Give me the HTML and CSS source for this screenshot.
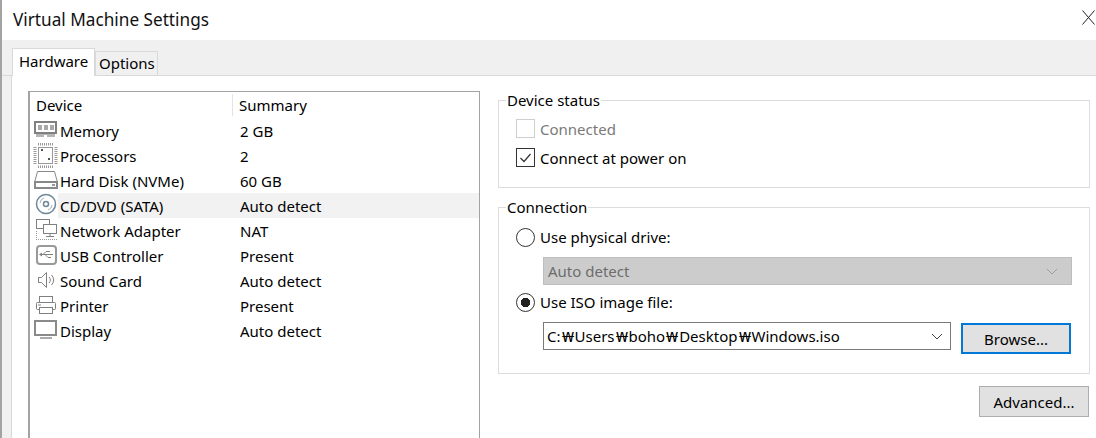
FILE: index.html
```html
<!DOCTYPE html>
<html lang="en">
<head>
<meta charset="utf-8">
<title>Virtual Machine Settings</title>
<link rel="stylesheet" href="styles.css">
</head>
<body>
<div class="window">
  <header class="titlebar">
    <h1 class="title">Virtual Machine Settings</h1>
    <svg class="close" width="13" height="15" viewBox="0 0 13 15"><path d="M.5.5 12.500 14.500M12.500.5.500 14.500" stroke="#222" stroke-width="1" fill="none"/></svg>
  </header>
  <div class="tabstrip">
    <div class="tab tab-active">Hardware</div>
    <div class="tab">Options</div>
  </div>
  <div class="page">
    <section class="devices">
      <div class="row head"><div class="col-device">Device</div><div class="col-summary">Summary</div></div>
      <div class="row"><svg class="icon" viewBox="0 0 26 25"><rect x="2" y="4" width="21" height="11" fill="#fff" stroke="#808080" stroke-width="2"/><path d="M5 7h4v5H5zM11 7h4v5h-4zM17 7h4v5h-4z" fill="#a8a8a8"/><path d="M3 16h19v3H3z" fill="#b5b5b5"/><path d="M11 17h3v2h-3z" fill="#fff"/></svg><div class="name">Memory</div><div class="val">2 GB</div></div>
      <div class="row"><svg class="icon" viewBox="0 0 26 25"><rect x="5.500" y="4.500" width="14" height="16" fill="#fff" stroke="#999"/><path d="M8 6h2v2H8zM15 15h2v2h-2z" fill="#555"/><path d="M5 1h15M5 24h15M2 4v17M23 4v17" stroke="#999" stroke-width="3" stroke-dasharray="1 1" fill="none"/></svg><div class="name">Processors</div><div class="val">2</div></div>
      <div class="row"><svg class="icon" viewBox="0 0 26 25"><path d="M4.500 3.500h17l3 11h-23z" fill="#fff" stroke="#888"/><rect x="2" y="14" width="22" height="6" fill="#fff" stroke="#888" stroke-width="2"/><path d="M19 16h3v2h-3z" fill="#999"/></svg><div class="name">Hard Disk (NVMe)</div><div class="val">60 GB</div></div>
      <div class="row selected"><svg class="icon" viewBox="0 0 26 25"><circle cx="13" cy="11" r="9.500" fill="#fff" stroke="#6f8796" stroke-width="1.500"/><circle cx="13" cy="11" r="2.500" fill="none" stroke="#6f8796" stroke-width="1.500"/><path d="M7 10a6 6 0 0 1 4-5M19 12a6 6 0 0 1-4 5" stroke="#9fb0bc" fill="none"/></svg><div class="name">CD/DVD (SATA)</div><div class="val">Auto detect</div></div>
      <div class="row"><svg class="icon" viewBox="0 0 26 25"><rect x="3.500" y="1.500" width="13" height="9" fill="#fff" stroke="#808080"/><rect x="10.500" y="6.500" width="13" height="9" fill="#fff" stroke="#808080"/><path d="M17 16v3M13 18.500h8" stroke="#808080" fill="none"/><path d="M3.500 13v8M3 21.500h21" stroke="#999" fill="none" stroke-dasharray="1 1"/></svg><div class="name">Network Adapter</div><div class="val">NAT</div></div>
      <div class="row"><svg class="icon" viewBox="0 0 26 25"><rect x="4" y="3" width="19" height="18" rx="3" fill="#fff" stroke="#999" stroke-width="2"/><path d="M7 11.500h13M10 11.500l3-3h4M12 11.500l3 3h3" stroke="#808080" fill="none"/><path d="M6 11.500l3-2v4z" fill="#808080"/></svg><div class="name">USB Controller</div><div class="val">Present</div></div>
      <div class="row"><svg class="icon" viewBox="0 0 26 25"><path d="M5.500 9.500h3l5-5v15l-5-5h-3z" fill="#fff" stroke="#808080"/><path d="M16 9a4 4 0 0 1 0 6M18.500 7a7 7 0 0 1 0 10" stroke="#808080" fill="none"/></svg><div class="name">Sound Card</div><div class="val">Auto detect</div></div>
      <div class="row"><svg class="icon" viewBox="0 0 26 25"><rect x="6.500" y="3.500" width="13" height="6" fill="#fff" stroke="#808080"/><rect x="3.500" y="9.500" width="19" height="7" rx="1" fill="#fff" stroke="#808080"/><rect x="6.500" y="14.500" width="13" height="6" fill="#fff" stroke="#808080"/><path d="M5 12h3" stroke="#808080"/></svg><div class="name">Printer</div><div class="val">Present</div></div>
      <div class="row"><svg class="icon" viewBox="0 0 26 25"><rect x="2" y="3" width="21" height="14" fill="#fff" stroke="#8a8a8a" stroke-width="2"/><path d="M1 16h23v2H1z" fill="#8a8a8a"/><path d="M7 19h12v2H7z" fill="#aaa"/></svg><div class="name">Display</div><div class="val">Auto detect</div></div>
    </section>
    <div class="settings">
      <fieldset class="group group-status">
        <legend class="legend">Device status</legend>
        <div class="check-line disabled"><span class="box box-off"></span>Connected</div>
        <div class="check-line"><span class="box"><svg width="13" height="13" viewBox="0 0 13 13"><path d="M1.500 7 5 10.500 11.500 3" stroke="#333" stroke-width="1.200" fill="none"/></svg></span>Connect at power on</div>
      </fieldset>
      <fieldset class="group group-conn">
        <legend class="legend">Connection</legend>
        <div class="radio-line"><span class="radio"></span>Use physical drive:</div>
        <div class="select select-off"><span>Auto detect</span><svg width="12" height="7" viewBox="0 0 12 7"><path d="M1 1 6 6 11 1" stroke="#a0a0a0" fill="none"/></svg></div>
        <div class="radio-line radio-line2"><span class="radio radio-on"></span>Use ISO image file:</div>
        <div class="iso-line">
          <div class="select select-iso"><span>C:<span class="won">₩</span>Users<span class="won">₩</span>boho<span class="won">₩</span>Desktop<span class="won">₩</span>Windows.iso</span><svg width="12" height="7" viewBox="0 0 12 7"><path d="M1 1 6 6 11 1" stroke="#444" fill="none"/></svg></div>
          <div class="btn btn-focus">Browse...</div>
        </div>
      </fieldset>
      <div class="actions"><div class="btn btn-adv">Advanced...</div></div>
    </div>
  </div>
</div>
</body>
</html>
```
FILE: styles.css
```css
* { box-sizing: border-box; }
html, body { margin: 0; height: 100%; overflow: hidden; }
body { background: #fff; font-family: "Noto Sans", "Noto Sans CJK KR", sans-serif; font-size: 15px; color: #000; }
.window { height: 438px; border-left: 2px solid #a3a3a3; display: flex; flex-direction: column; background: #f0f0f0; }
.titlebar { height: 40px; flex: none; background: #fff; display: flex; align-items: center; justify-content: space-between; padding: 0 1px 0 11px; }
.title { margin: -2px 0 0; font-size: 17.2px; font-weight: 400; color: #111; }
.close { margin-top: -5px; }
.tabstrip { height: 36px; flex: none; display: flex; align-items: flex-end; padding-left: 10px; border-bottom: 1px solid #d9d9d9; }
.tab { height: 24px; width: 63px; padding: 0 3px; margin-left: 0; border: 1px solid #d9d9d9; border-bottom: 0; line-height: 23px; }
.tab-active { height: 28px; width: 83px; margin: 0 0 -1px; padding: 0 6px; background: #fff; line-height: 25px; }
.page { flex: 1; margin-left: 9px; border-left: 1px solid #d9d9d9; background: #fff; display: flex; padding: 15px 6px 0 16px; gap: 18px; min-height: 0; }
.devices { width: 452px; flex: none; border: 1px solid #a3a3a3; border-width: 1px 1px 0 2px; padding: 1px 0 0; margin-bottom: -10px; }
.row { height: 25px; display: flex; align-items: center; white-space: nowrap; }
.head { height: 24px; margin-bottom: 1px; }
.col-device { width: 203px; padding-left: 6px; border-right: 1px solid #e3e3e3; height: 22px; line-height: 22px; }
.col-summary { padding-left: 6px; }
.icon { width: 26px; height: 25px; margin-left: 3px; flex: none; }
.name { width: 181px; padding: 0 0 0 1px; }
.selected { background: linear-gradient(to right, #fff 28px, #f2f2f2 28px); }
.settings { flex: 1; display: flex; flex-direction: column; margin-top: -1px; }
.group { margin: 0; border: 1px solid #dcdcdc; padding: 0 0 0 17px; min-width: 0; }
.legend { padding: 0 1px; margin-left: -10px; line-height: 20px; }
.group-status { height: 98px; }
.group-conn { height: 177px; margin-top: 9px; }
.check-line { display: flex; align-items: center; height: 29px; gap: 5px; }
.group-status .check-line:first-of-type { margin-top: 4px; }
.disabled { color: #7a7a7a; }
.box { width: 19px; height: 19px; border: 1px solid #333; display: flex; align-items: center; justify-content: center; background: #fff; }
.box-off { border-color: #cfcfcf; }
.radio-line { display: flex; align-items: center; height: 24px; gap: 5px; margin-top: 8px; }
.radio-line2 { margin-top: 5px; }
.radio { width: 19px; height: 19px; border: 1px solid #333; border-radius: 50%; background: #fff; display: block; }
.radio-on { background: radial-gradient(circle, #222 0 4.500px, #fff 5px); }
.select { height: 28px; display: flex; align-items: center; justify-content: space-between; padding: 0 13px 0 4px; }
.select-off { width: 529px; margin: 8px 0 0 27px; background: #ccc; border: 1px solid #bdbdbd; color: #6d6d6d; }
.iso-line { display: flex; align-items: flex-start; margin: 8px 0 0 27px; gap: 10px; }
.select-iso { width: 408px; border: 1px solid #7a7a7a; padding-left: 3px; padding-right: 7px; }
.won { display: inline-block; width: 14px; text-align: center; transform: scaleX(1.2); }
.btn { width: 110px; height: 31px; background: #e1e1e1; border: 1px solid #adadad; display: flex; align-items: center; justify-content: center; }
.btn-focus { border: 2px solid #0078d7; margin-top: 1px; }
.actions { display: flex; justify-content: flex-end; margin-top: 12px; padding-right: 1px; }
```
